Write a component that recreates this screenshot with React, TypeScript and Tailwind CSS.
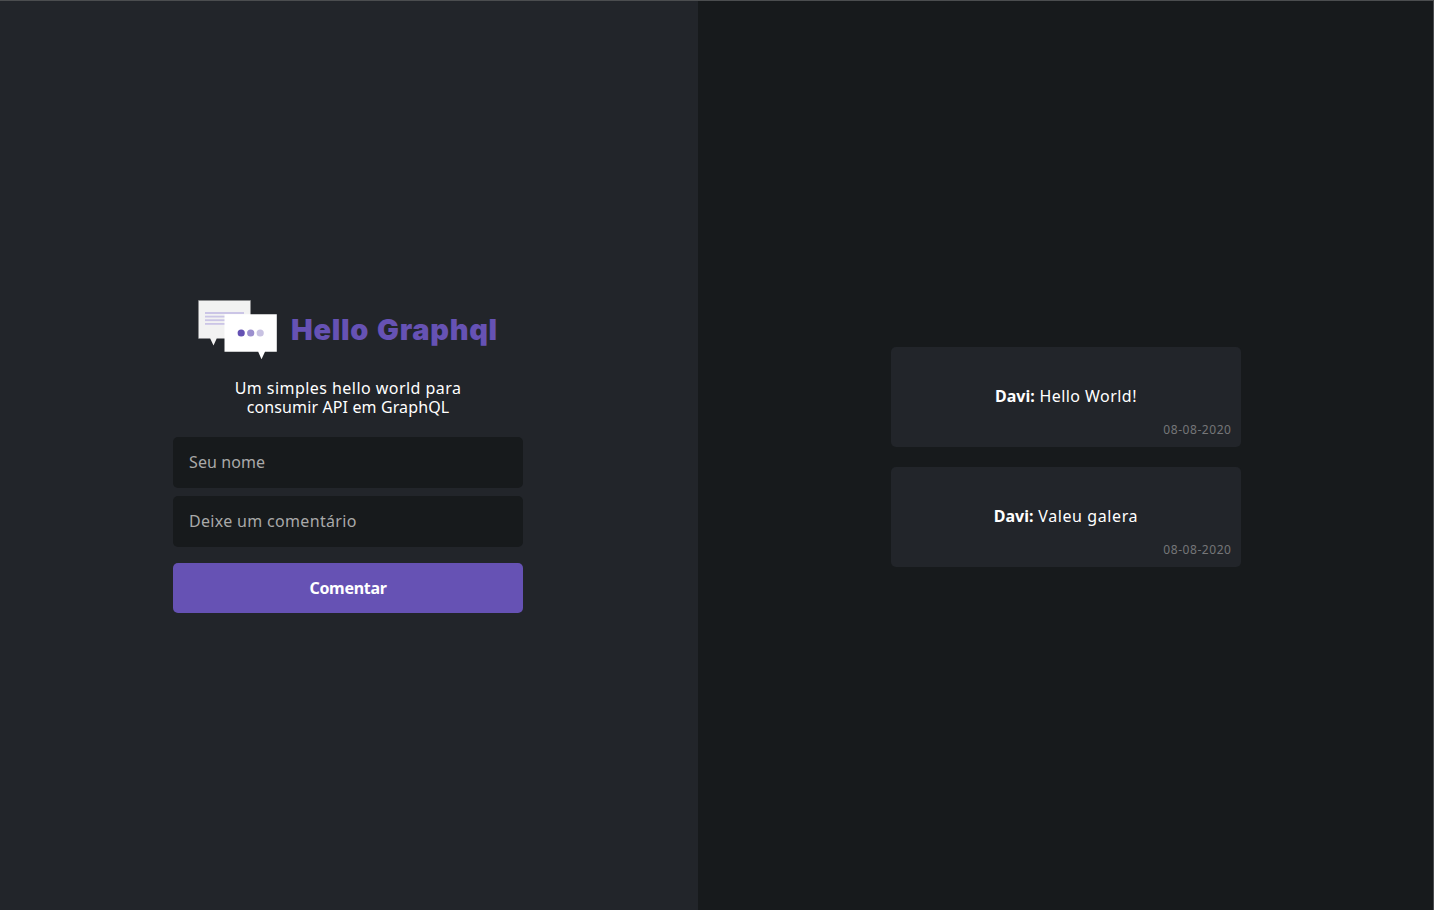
const comments = [
  { author: "Davi", text: "Hello World!", date: "08-08-2020", tracking: "tracking-[0.45px]" },
  { author: "Davi", text: "Valeu galera", date: "08-08-2020", tracking: "tracking-[0.6px]" },
];

function Logo() {
  return (
    <svg width="80" height="60" viewBox="0 0 80 60" className="shrink-0" aria-hidden="true">
      <path d="M.5 .5H52.5V38.5H18.7L15.5 45.5L12.2 38.5H.5Z" fill="#f2f2f2" />
      <path d="M.5 38.5V.5H52.5V14" fill="none" stroke="#8b8c8e" strokeWidth=".7" />
      <g fill="#cbc5e6">
        <rect x="7" y="12" width="39" height="2" />
        <rect x="7" y="15.7" width="39" height="1.8" />
        <rect x="7" y="19.3" width="39" height="1.8" />
        <rect x="7" y="23" width="39" height="1.8" />
      </g>
      <path d="M26.5 14.3H78.8V51.8H67L63.5 59.2L60.2 51.8H26.5Z" fill="#fff" />
      <circle cx="43.2" cy="33" r="3.6" fill="#6451b3" />
      <circle cx="52.7" cy="33" r="3.6" fill="#9b8fce" />
      <circle cx="62.2" cy="33" r="3.6" fill="#c8c2e2" />
    </svg>
  );
}

export default function App() {
  return (
    <div className="flex h-[910px] w-[1434px] overflow-hidden border-t border-r border-t-[#4b4d4f] border-r-[#4b4d4f] bg-[#171a1c] font-['Noto_Sans',sans-serif] text-base text-white">
      <section className="flex w-[698px] shrink-0 flex-col items-center bg-[#22252a] pt-[299px] pr-[2px]">
        <header className="flex h-[60px] w-[300px]">
          <Logo />
          <h1 className="ml-[13px] pt-[12px] font-['Inter',sans-serif] text-[29px] leading-[36px] font-black tracking-[0.7px] [word-spacing:1.5px] whitespace-nowrap text-[#6652b4]">
            Hello Graphql
          </h1>
        </header>
        <p className="mt-[19px] flex flex-col items-center leading-[19px] whitespace-nowrap">
          <span className="tracking-[0.45px]">Um simples hello world para</span>
          <span className="tracking-[0.12px]">consumir API em GraphQL</span>
        </p>
        <form className="mt-[20px] flex w-[350px] flex-col" onSubmit={(e) => e.preventDefault()}>
          <input
            className="h-[51px] rounded-[5px] bg-[#171a1c] px-4 pb-[2px] tracking-[0.1px] outline-none placeholder:text-[#a9a9a9]"
            placeholder="Seu nome"
          />
          <input
            className="mt-2 h-[51px] rounded-[5px] bg-[#171a1c] px-4 pb-[2px] tracking-[0.32px] outline-none placeholder:text-[#a9a9a9]"
            placeholder="Deixe um comentário"
          />
          <button className="mt-4 h-[50px] rounded-[5px] bg-[#6652b4] pb-px font-bold tracking-[-0.3px]">Comentar</button>
        </form>
      </section>
      <section className="flex flex-1 flex-col items-center gap-5 pt-[346px]">
        {comments.map((c) => (
          <article key={c.text} className="flex h-[100px] w-[350px] flex-col rounded-[5px] bg-[#22252a] px-[10px] pt-[38px]">
            <p className={`pl-px text-center leading-[22px] ${c.tracking}`}>
              <strong className="tracking-normal">{c.author}:</strong> {c.text}
            </p>
            <time className="-mr-px mt-[15px] text-right text-xs leading-4 tracking-[0.55px] text-[#757678]">{c.date}</time>
          </article>
        ))}
      </section>
    </div>
  );
}
